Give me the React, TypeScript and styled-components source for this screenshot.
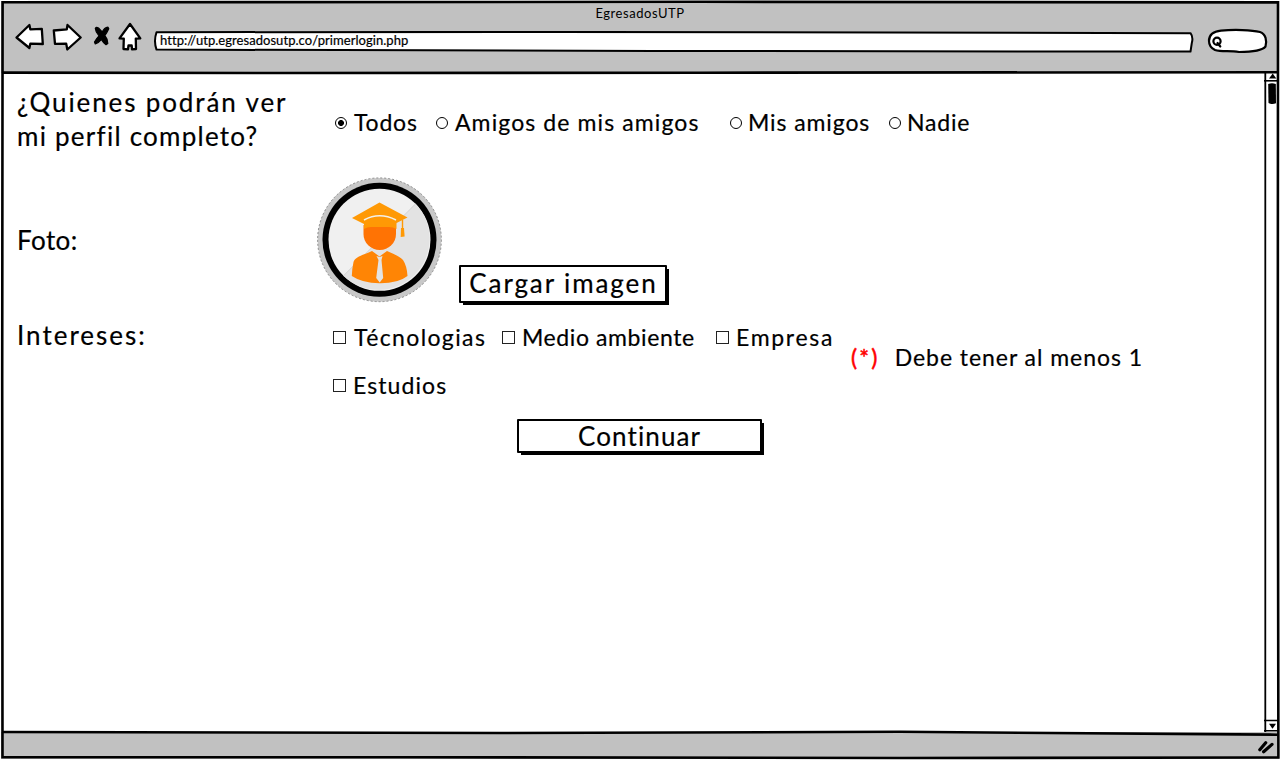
import React from "react";
import styled, { createGlobalStyle } from "styled-components";

const Global = createGlobalStyle`
  * { box-sizing: border-box; }
  html, body { margin: 0; padding: 0; background: #fff; }
  body {
    font-family: Lato, "Open Sans", sans-serif;
    color: #000;
    overflow: hidden;
    -webkit-text-stroke: 0.2px currentColor;
  }
  button { font: inherit; color: inherit; }
`;

const Window = styled.div`
  width: 1280px;
  height: 760px;
  padding: 1px;
  display: flex;
  flex-direction: column;
  position: relative;
`;

const Frame = styled.svg`
  position: absolute;
  left: 0;
  top: 0;
  pointer-events: none;
`;

const Header = styled.header`
  height: 72px;
  background: #c1c1c1;
  display: flex;
  flex-direction: column;
`;

const Title = styled.div`
  height: 20px;
  line-height: 25px;
  font-size: 13px;
  letter-spacing: 0.55px;
  text-align: center;
  -webkit-text-stroke: 0;
`;

const Toolbar = styled.div`
  display: flex;
  align-items: flex-start;
  padding-left: 13px;
`;

const AddressBar = styled.div`
  width: 1040px;
  height: 22px;
  margin: 10px 12px 0 8px;
  padding-left: 6px;
  position: relative;
  font-size: 13px;
  line-height: 19px;
  letter-spacing: 0.05px;
`;

const AddressOutline = styled.svg`
  position: absolute;
  left: 0;
  top: 0;
`;

const AddressText = styled.span`
  position: relative;
`;

const SearchSlot = styled.div`
  padding-top: 5px;
`;

const Main = styled.div`
  height: 659px;
  display: flex;
`;

const Content = styled.main`
  flex: 1;
  padding: 12px 0 0 16px;
  display: flex;
  flex-direction: column;
`;

const Scrollbar = styled.div`
  width: 15px;
  display: flex;
  flex-direction: column;
  justify-content: space-between;
`;

const Footer = styled.footer`
  flex: 1;
  background: #c1c1c1;
  display: flex;
  justify-content: flex-end;
  padding: 7px 2px 0 0;
`;

const Row = styled.section<{ $h: number }>`
  display: flex;
  height: ${(p) => p.$h}px;
`;

const RowLabel = styled.div<{ $top?: number; $ls?: number }>`
  width: 300px;
  padding-top: ${(p) => p.$top ?? 0}px;
  font-size: 26px;
  line-height: 34px;
  letter-spacing: ${(p) => p.$ls ?? 1}px;
  white-space: nowrap;
`;

const Line = styled.div<{ $ls: number }>`
  letter-spacing: ${(p) => p.$ls}px;
`;

const Options = styled.div<{ $top: number; $left: number }>`
  display: flex;
  align-items: flex-start;
  padding: ${(p) => p.$top}px 0 0 ${(p) => p.$left}px;
`;

const Option = styled.label<{ $w: number; $gap: number; $ls: number }>`
  width: ${(p) => p.$w}px;
  height: 28px;
  display: flex;
  align-items: center;
  gap: ${(p) => p.$gap}px;
  font-size: 23px;
  letter-spacing: ${(p) => p.$ls}px;
  white-space: nowrap;
`;

const Radio = styled.span<{ $on?: boolean }>`
  width: 12px;
  height: 12px;
  margin-top: 1px;
  flex: none;
  border: 1px solid #000;
  border-radius: 50%;
  background: ${(p) => (p.$on ? "radial-gradient(circle, #000 2.6px, #fff 3.3px)" : "#fff")};
`;

const Check = styled.span`
  width: 13px;
  height: 13px;
  margin-top: 1px;
  flex: none;
  border: 1px solid #222;
  background: #fff;
`;

const Interests = styled.div`
  width: 534px;
  display: flex;
  flex-wrap: wrap;
  align-content: flex-start;
  row-gap: 20px;
  padding: 6px 0 0 16px;
`;

const Hint = styled.div`
  padding-top: 26px;
  display: flex;
  gap: 15px;
  font-size: 23px;
  line-height: 28px;
  white-space: nowrap;
`;

const Required = styled.span`
  color: #f00;
  letter-spacing: 2.2px;
  -webkit-text-stroke: 0.5px #f00;
`;

const HintText = styled.span<{ $ls: number }>`
  letter-spacing: ${(p) => p.$ls}px;
`;

const Button = styled.button<{ $w: number; $h: number; $ls: number }>`
  width: ${(p) => p.$w}px;
  height: ${(p) => p.$h}px;
  padding: 0 0 2px;
  border: 2px solid #000;
  border-radius: 1px;
  background: #fff;
  box-shadow: 3px 3px 0 -1px #000;
  font-size: 26px;
  line-height: 30px;
  letter-spacing: ${(p) => p.$ls}px;
  text-indent: ${(p) => p.$ls - 1}px;
  white-space: nowrap;
`;

const PhotoArea = styled.div`
  display: flex;
  align-items: flex-start;
  padding-top: 1px;
`;

const UploadSlot = styled.div`
  padding: 88px 0 0 16px;
`;

const SubmitSlot = styled.div`
  padding-left: 500px;
`;

const NavIcons = () => (
  <svg width="132" height="34" viewBox="14 21 132 34" fill="#fff" stroke="#000" strokeWidth="2.3" strokeLinejoin="round" strokeLinecap="round">
    <path d="M16.5 37.5 L29.4 25 L30.3 29.3 L41.8 28.8 L42.8 44 L30.3 43.7 L29.4 48 Z" />
    <path d="M53.8 30.5 L66.8 29.3 L67.5 25 L80.7 37.5 L67.3 49.5 L66.2 43.6 L55 43.8 Z" />
    <path fill="#000" strokeWidth="1.2" d="M95.3 28.5 Q96 26.6 98.5 28 L102.2 32 Q104.2 27.8 108 27.2 L108.8 28.8 Q107 32.8 104.8 35.5 Q107.8 39 107.8 43.5 L106 44.7 Q103 42.5 101.3 39.5 Q98.5 42.8 95.3 44 L94.5 42 Q96.5 38.3 99 35.8 Q95.5 32 95.3 28.5 Z" />
    <path d="M130 24 L140.3 38.4 L135.8 38.6 L136 49 L132 49.3 L131.7 45.5 L128.5 45.5 L128 49.3 L123.5 49 L123.8 38.6 L119.5 38.4 Z" />
  </svg>
);

const SearchBox = () => (
  <svg width="62" height="28" viewBox="1206 26 62 28" fill="none" stroke="#000" strokeWidth="2.2" strokeLinecap="round">
    <path fill="#fff" d="M1209 41 C1209 35 1213 31.5 1221 30.7 C1234 29.3 1252 30 1260 32 C1266 34 1267 41 1265.5 46.5 C1262 51 1250 52 1239 52 C1230 50.5 1221 52 1215 50 C1211 48 1209 45 1209 41 Z" />
    <circle cx="1217" cy="41.2" r="3.6" />
    <path d="M1217.5 43 L1220.3 46.5" />
  </svg>
);

const ScrollTop = () => (
  <svg width="15" height="34" viewBox="1264 73 15 34">
    <path d="M1264 80.8 H1278" stroke="#000" strokeWidth="1.6" />
    <path d="M1269 78.6 L1272.7 73.6 L1276.3 78.6 Z" />
    <path d="M1268.2 84 Q1272 82.3 1275.8 84 L1276 103.3 Q1272 105 1268.5 103 Z" />
  </svg>
);

const ScrollBottom = () => (
  <svg width="15" height="14" viewBox="1264 718 15 14">
    <path d="M1264 720.4 H1278 M1264 730.8 H1278" stroke="#000" strokeWidth="1.5" />
    <path d="M1269 723.7 H1276 L1272.5 728.7 Z" />
  </svg>
);

const Grip = () => (
  <svg width="20" height="18" viewBox="1257 739 20 18" fill="none" stroke="#000" strokeWidth="3.2" strokeLinecap="round">
    <path d="M1259.8 749.8 L1265.7 742.8 M1263.6 751.8 L1272 744.4" />
  </svg>
);

const Avatar = () => (
  <svg width="126" height="126" viewBox="0 0 126 126">
    <circle cx="62.5" cy="62.8" r="61.9" fill="#c8c8c8" stroke="#777" strokeWidth="0.8" strokeDasharray="2 2" />
    <circle cx="62.5" cy="62.8" r="57" fill="#000" />
    <circle cx="62.5" cy="62.8" r="51" fill="#f0f0f0" />
    <path d="M98.6 26.8 A51 51 0 0 1 26.4 98.8 Z" fill="#e3e3e3" />
    <path d="M26.4 98.8 L98.6 26.8" stroke="#c4c4c4" strokeWidth="0.6" />
    <path fill="#ff8505" d="M55 74 C46 78 38 80 36.5 85 Q35 92 34.8 99 Q45 106 62.5 106.3 Q81 106.5 90.5 99 Q90 89 86 83 Q82 79 70 74 L62.5 79.5 Z" />
    <path fill="#e3e3e3" d="M59.5 79 L62.5 80 L65.5 79 L64.5 83 L66.2 101 L62.7 105.5 L59.2 101 L61.5 83 Z" />
    <path fill="#ff7304" d="M46.5 48 H79 V57 A16.2 16 0 0 1 46.5 57 Z" />
    <path fill="#ff9905" d="M62.5 25.5 L90.5 40.5 L79.5 46 V52 Q76 50 72 50 H54 Q50 50 47 52 V47 L35 41 Z" />
    <path d="M47 43 Q62.5 34.5 79 43" fill="none" stroke="#f4f0e7" strokeWidth="1.5" />
    <path d="M85.5 43 V54" stroke="#ff9905" strokeWidth="1.4" />
    <path fill="#ff9905" d="M84 51 H87 L87.6 59.5 L83.7 60 Z" />
  </svg>
);

const FrameLines = () => (
  <Frame width="1280" height="760" viewBox="0 0 1280 760" fill="none" stroke="#000" strokeWidth="2.6">
    <path d="M2.6 2.3 L700 1.8 L1278 2.4 L1277.8 380 L1278.4 757.5 L900 758 L400 757.2 L2.5 757.2 L2.2 380 Z" />
    <path d="M2 72.6 L280 73 L700 72.7 L1278 72.2" />
    <path d="M2 732 L500 733 L900 731.8 L1278 734.7" />
    <path d="M1265.3 72 V732" strokeWidth="1.8" />
  </Frame>
);

export default function App() {
  return (
    <>
      <Global />
      <Window>
        <Header>
          <Title>EgresadosUTP</Title>
          <Toolbar>
            <NavIcons />
            <AddressBar>
              <AddressOutline width="1040" height="22" viewBox="0 0 1040 22" fill="#fff" stroke="#000" strokeWidth="2" strokeLinejoin="round">
                <path d="M2.5 1.2 L400 0.9 L1036.5 2.2 Q1039.5 6 1037.8 12 L1036.5 20.6 L500 20 L2.5 18.6 Q-0.5 10 2.5 1.2 Z" />
              </AddressOutline>
              <AddressText>http://utp.egresadosutp.co/primerlogin.php</AddressText>
            </AddressBar>
            <SearchSlot>
              <SearchBox />
            </SearchSlot>
          </Toolbar>
        </Header>
        <Main>
          <Content>
            <Row $h={91}>
              <RowLabel>
                <Line $ls={1.87}>¿Quienes podrán ver</Line>
                <Line $ls={1.25}>mi perfil completo?</Line>
              </RowLabel>
              <Options $top={23} $left={18}>
                <Option $w={101} $gap={7} $ls={0.8}><Radio $on />Todos</Option>
                <Option $w={294} $gap={7} $ls={1.1}><Radio />Amigos de mis amigos</Option>
                <Option $w={159} $gap={6} $ls={0.9}><Radio />Mis amigos</Option>
                <Option $w={90} $gap={6} $ls={0.8}><Radio />Nadie</Option>
              </Options>
            </Row>
            <Row $h={141}>
              <RowLabel $top={47} $ls={0.4}>Foto:</RowLabel>
              <PhotoArea>
                <Avatar />
                <UploadSlot>
                  <Button $w={208} $h={38} $ls={1.9}>Cargar imagen</Button>
                </UploadSlot>
              </PhotoArea>
            </Row>
            <Row $h={102}>
              <RowLabel $top={1} $ls={2}>Intereses:</RowLabel>
              <Interests>
                <Option $w={169} $gap={8} $ls={1.38}><Check />Técnologias</Option>
                <Option $w={214} $gap={7} $ls={0.6}><Check />Medio ambiente</Option>
                <Option $w={120} $gap={7} $ls={1.7}><Check />Empresa</Option>
                <Option $w={120} $gap={7} $ls={1.1}><Check />Estudios</Option>
              </Interests>
              <Hint>
                <Required>(*)</Required>
                <HintText $ls={0.95}>Debe tener al menos 1</HintText>
              </Hint>
            </Row>
            <SubmitSlot>
              <Button $w={245} $h={34} $ls={1.1}>Continuar</Button>
            </SubmitSlot>
          </Content>
          <Scrollbar>
            <ScrollTop />
            <ScrollBottom />
          </Scrollbar>
        </Main>
        <Footer>
          <Grip />
        </Footer>
        <FrameLines />
      </Window>
    </>
  );
}
